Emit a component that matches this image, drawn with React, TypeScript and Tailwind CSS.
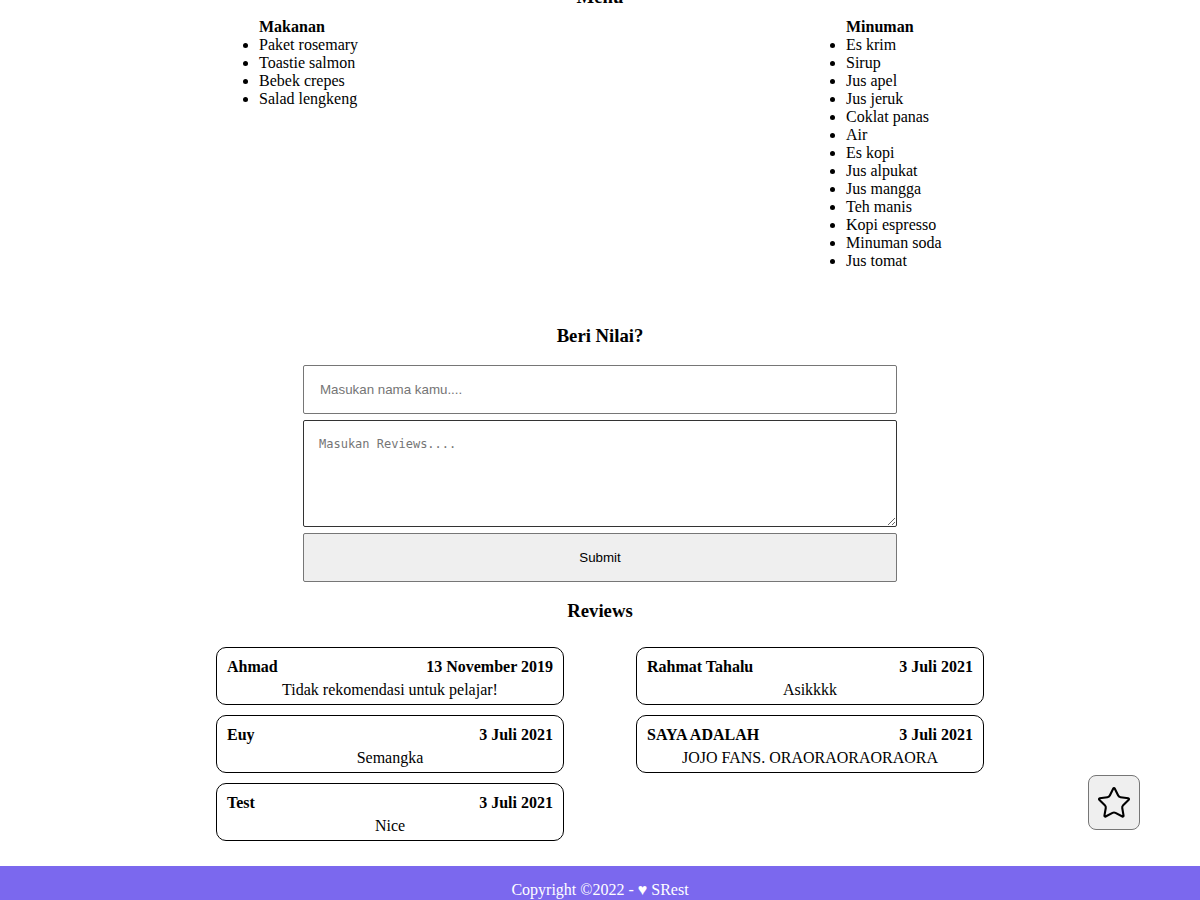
import React from 'react'
import { Star } from 'lucide-react'

const makanan = ['Paket rosemary', 'Toastie salmon', 'Bebek crepes', 'Salad lengkeng']
const minuman = [
  'Es krim',
  'Sirup',
  'Jus apel',
  'Jus jeruk',
  'Coklat panas',
  'Air',
  'Es kopi',
  'Jus alpukat',
  'Jus mangga',
  'Teh manis',
  'Kopi espresso',
  'Minuman soda',
  'Jus tomat',
]

interface Review {
  name: string
  date: string
  text: string
}

const leftReviews: Review[] = [
  { name: 'Ahmad', date: '13 November 2019', text: 'Tidak rekomendasi untuk pelajar!' },
  { name: 'Euy', date: '3 Juli 2021', text: 'Semangka' },
  { name: 'Test', date: '3 Juli 2021', text: 'Nice' },
]

const rightReviews: Review[] = [
  { name: 'Rahmat Tahalu', date: '3 Juli 2021', text: 'Asikkkk' },
  { name: 'SAYA ADALAH', date: '3 Juli 2021', text: 'JOJO FANS. ORAORAORAORAORA' },
]

function MenuList({ title, items, className = '' }: { title: string; items: string[]; className?: string }) {
  return (
    <ul className={`pl-10 leading-[18px] ${className}`}>
      <div className="font-bold">{title}</div>
      {items.map((item) => (
        <li key={item} className="list-disc">
          {item}
        </li>
      ))}
    </ul>
  )
}

function ReviewCard({ review }: { review: Review }) {
  return (
    <div className="w-[348px] rounded-[10px] border border-black px-[10px] pt-[10px] pb-[5px] leading-[18px]">
      <div className="flex justify-between font-bold">
        <span>{review.name}</span>
        <span>{review.date}</span>
      </div>
      <p className="mt-[5px] text-center">{review.text}</p>
    </div>
  )
}

export default function App() {
  return (
    <div className="h-[900px] overflow-hidden bg-white text-black text-base font-['Liberation_Serif','Times_New_Roman',serif]">
      <main className="-mt-[14px]">
        {/* Menu */}
        <h3 className="text-center text-[18.72px] font-bold leading-[22px]">Menu</h3>
        <div className="mt-[10px] flex">
          <MenuList title="Makanan" items={makanan} className="ml-[219px] w-[587px]" />
          <MenuList title="Minuman" items={minuman} />
        </div>

        {/* Form */}
        <h3 className="mt-[55px] text-center text-[18.72px] font-bold leading-[22px]">Beri Nilai?</h3>
        <form className="mx-auto mt-[18px] flex w-[594px] flex-col gap-[6px]">
          <input
            type="text"
            placeholder="Masukan nama kamu...."
            className="h-[49px] w-full rounded-[2px] border border-[#767676] px-4 text-[13.33px] font-['Liberation_Sans',Arial,sans-serif] placeholder:text-[#757575] outline-none"
          />
          <textarea
            placeholder="Masukan Reviews...."
            className="h-[107px] w-full rounded-[2px] border border-[#333] px-[15px] py-[14px] text-[12px] font-['DejaVu_Sans_Mono',monospace] placeholder:text-[#757575] outline-none"
          />
          <button
            type="button"
            className="h-[49px] w-full rounded-[2px] border border-[#767676] bg-[#efefef] text-[13.33px] font-['Liberation_Sans',Arial,sans-serif] text-black"
          >
            Submit
          </button>
        </form>

        {/* Reviews */}
        <h3 className="mt-[18px] text-center text-[18.72px] font-bold leading-[22px]">Reviews</h3>
        <div className="mt-[25px] flex justify-center gap-[72px]">
          <div className="flex flex-col gap-[10px]">
            {leftReviews.map((r) => (
              <ReviewCard key={r.name} review={r} />
            ))}
          </div>
          <div className="flex flex-col gap-[10px]">
            {rightReviews.map((r) => (
              <ReviewCard key={r.name} review={r} />
            ))}
          </div>
        </div>

        {/* Footer */}
        <footer className="mt-[25px] bg-[#7b68ee] pt-[15px] pb-[20px] text-center leading-[18px] text-white">
          Copyright ©2022 - ♥ SRest
        </footer>
      </main>

      <button
        type="button"
        className="fixed right-[60px] bottom-[70px] flex h-[55px] w-[52px] items-center justify-center rounded-[8px] border border-[#767676] bg-[#efefef]"
      >
        <Star size={36} strokeWidth={1.4} color="#000" />
      </button>
    </div>
  )
}
